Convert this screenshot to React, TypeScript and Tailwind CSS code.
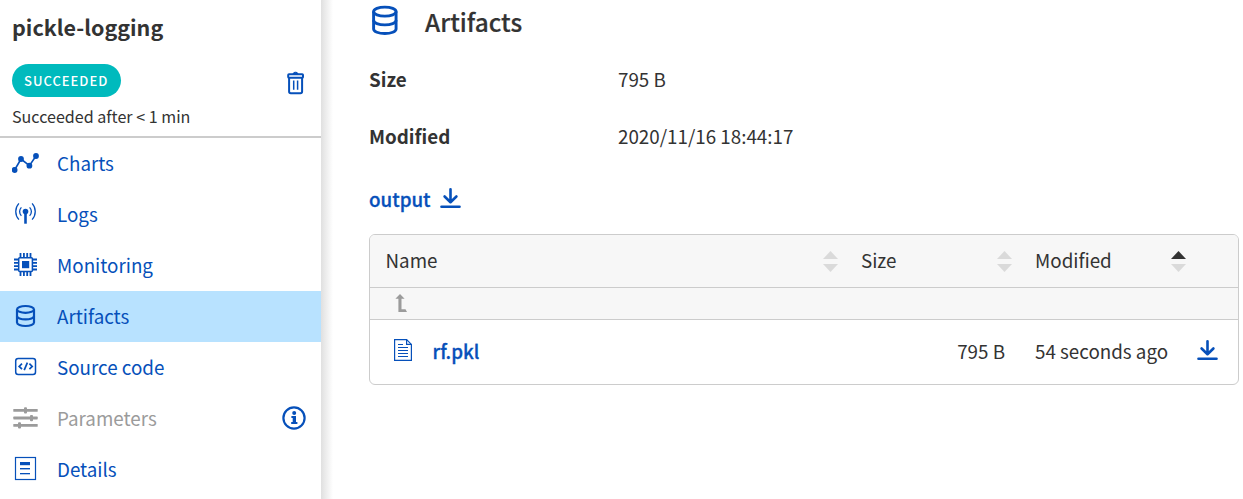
import type { ReactNode } from "react";

const BLUE = "#0650ba";

function Database({ className }: { className: string }) {
  return (
    <svg viewBox="0 0 28 27" className={className} fill="none" stroke={BLUE} strokeWidth="2.2">
      <ellipse cx="13.5" cy="6.4" rx="8.5" ry="3.4" />
      <path d="M5 6.4v13.2c0 1.9 3.8 3.4 8.5 3.4s8.5-1.5 8.5-3.4V6.4" />
      <path d="M5 13c0 1.9 3.8 3.4 8.5 3.4S22 14.9 22 13" />
    </svg>
  );
}

function ChartsIcon() {
  return (
    <svg viewBox="0 0 28 27" className="h-[27px] w-7" fill={BLUE}>
      <path d="M2.6 20 9 9l8.4 6.7L24 6" fill="none" stroke={BLUE} strokeWidth="1.6" />
      <circle cx="2.6" cy="20" r="2.9" />
      <circle cx="9" cy="9" r="2.9" />
      <circle cx="17.4" cy="15.7" r="2.9" />
      <circle cx="24" cy="6" r="2.9" />
    </svg>
  );
}

function LogsIcon() {
  return (
    <svg viewBox="0 0 28 27" className="h-[27px] w-7" fill="none" stroke={BLUE} strokeWidth="1.3">
      <circle cx="13.5" cy="10.6" r="2.8" fill={BLUE} stroke="none" />
      <path d="M13.5 11v11.7" strokeWidth="2.6" />
      <path d="M9.4 6.400c-2.400 2.400-2.400 6 0 8.400M17.600 6.400c2.400 2.400 2.400 6 0 8.400" />
      <path d="M6.900 2.400c-4.200 4.600-4.200 11.600 0 16.200M20.100 2.400c4.200 4.600 4.200 11.600 0 16.200" />
    </svg>
  );
}

function ChipIcon() {
  return (
    <svg viewBox="0 0 28 27" className="h-[27px] w-7" fill="none" stroke={BLUE}>
      <rect x="6.700" y="5.700" width="13.700" height="13.700" rx="1" strokeWidth="1.500" />
      <rect x="10" y="9" width="7.200" height="7.200" fill={BLUE} stroke="none" />
      <path
        strokeWidth="1.800"
        d="M8.500 1v4.500M11.900 1v4.500M15.200 1v4.500M18.500 1v4.500M8.500 19.500V24M11.900 19.500V24M15.200 19.500V24M18.500 19.500V24M2 7.500h4.500M2 10.900h4.500M2 14.200h4.500M2 17.500h4.500M20.500 7.500H25M20.500 10.900H25M20.500 14.200H25M20.500 17.500H25"
      />
    </svg>
  );
}

function CodeIcon() {
  return (
    <svg viewBox="0 0 28 27" className="h-[27px] w-7" fill="none" stroke={BLUE}>
      <rect x="3.7" y="4.6" width="19.8" height="15.8" rx="2.5" strokeWidth="1.5" />
      <path d="M10 9.700 7.200 12.400 10 15.100M17.400 9.700l2.800 2.700-2.800 2.700M15.400 8.600l-3.200 7.600" strokeWidth="1.700" />
    </svg>
  );
}

function SlidersIcon() {
  return (
    <svg viewBox="0 0 28 27" className="h-[27px] w-7" fill="#9b9b9b">
      <rect x="1.3" y="4" width="24.4" height="2.8" rx=".6" />
      <rect x="1.3" y="11.6" width="24.4" height="2.8" rx=".6" />
      <rect x="1.3" y="19" width="24.4" height="2.8" rx=".6" />
      <rect x="12" y="2.3" width="3" height="6.3" rx="1" />
      <rect x="18" y="9.9" width="3" height="6.3" rx="1" />
      <rect x="6" y="17.3" width="3" height="6.3" rx="1" />
    </svg>
  );
}

function DetailsIcon() {
  return (
    <svg viewBox="0 0 28 27" className="h-[27px] w-7" fill={BLUE}>
      <rect x="3.5" y="1.5" width="20" height="22" fill="none" stroke={BLUE} strokeWidth="1.2" />
      <rect x="8" y="6" width="10" height="3.2" />
      <rect x="8" y="12" width="10" height="1.4" />
      <rect x="8" y="17" width="10" height="1.3" />
    </svg>
  );
}

function TrashIcon() {
  return (
    <svg viewBox="0 0 18 24" className="h-6 w-[18px]" fill="none" stroke={BLUE} strokeWidth="2">
      <path d="M6 2.500C6.500 .8 10.500 .8 11 2.500z" fill={BLUE} strokeWidth="1" />
      <rect x="1.200" y="3.200" width="14.800" height="3.600" rx=".8" strokeWidth="2" />
      <path d="M2.100 7v13.500q0 1.700 1.700 1.700h9.600q1.700 0 1.700-1.700V7" />
      <path d="M6.700 9.500v9.200M10.600 9.500v9.200" strokeWidth="1.500" />
    </svg>
  );
}

function InfoIcon() {
  return (
    <svg viewBox="0 0 24 24" className="h-6 w-6" fill={BLUE}>
      <circle cx="12" cy="12" r="10.600" fill="none" stroke={BLUE} strokeWidth="2.200" />
      <circle cx="12.200" cy="7.100" r="2" />
      <path d="M9.400 10h4.600v6.100h1.400v1.900H9.200v-1.900h1.500v-4.200H9.400z" />
    </svg>
  );
}

function DownloadIcon() {
  return (
    <svg viewBox="0 0 22 22" className="h-[22px] w-[22px]" fill="none" stroke={BLUE} strokeWidth="2.600" strokeLinecap="round">
      <path d="M10.500 2.200v12.300M4.600 9.500l5.900 5.700 5.900-5.700" strokeLinejoin="round" />
      <path d="M1.500 19.700h18" />
    </svg>
  );
}

function UpIcon() {
  return (
    <svg viewBox="0 0 12 18" className="h-[18px] w-3" fill="#9b9b9b">
      <path d="M5 0 9.600 4.800H6.500v10.400h4L12 18H3.400V4.800H.4z" />
    </svg>
  );
}

function FileIcon() {
  return (
    <svg viewBox="0 0 18 22" className="h-[22px] w-[18px]" fill="none" stroke={BLUE}>
      <path d="M.6.600h12L17.400 5.400v16H.6z" strokeWidth="1.200" />
      <path d="M12.600.600v4.800h4.800" strokeWidth="1.200" />
      <path d="M4 5.500h5M4 8.500h10M4 11.500h10M4 14.500h10M4 17.500h10" strokeWidth="1.100" />
    </svg>
  );
}

function Sort({ active = false }: { active?: boolean }) {
  return (
    <svg viewBox="0 0 15 21" className="h-[21px] w-[15px]">
      <path d="M7.500 0 15 8H0z" fill={active ? "#333333" : "#dadada"} />
      <path d="M0 13h15l-7.500 8z" fill="#dadada" />
    </svg>
  );
}

interface Item {
  label: string;
  icon: ReactNode;
  active?: boolean;
  disabled?: boolean;
}

const items: Item[] = [
  { label: "Charts", icon: <ChartsIcon /> },
  { label: "Logs", icon: <LogsIcon /> },
  { label: "Monitoring", icon: <ChipIcon /> },
  { label: "Artifacts", icon: <Database className="h-[27px] w-7" />, active: true },
  { label: "Source code", icon: <CodeIcon /> },
  { label: "Parameters", icon: <SlidersIcon />, disabled: true },
  { label: "Details", icon: <DetailsIcon /> },
];

function Sidebar() {
  return (
    <aside className="w-[321px] shrink-0 bg-white">
      <header className="h-[138px] border-b-2 border-[#cccccc] pl-3 pr-4">
        <h1 className="pt-[11px] text-[21.5px] font-bold leading-8">pickle-logging</h1>
        <div className="mt-[21px] flex items-start justify-between">
          <span className="flex h-[33px] w-[109px] items-center whitespace-nowrap rounded-full bg-[#00babd] pl-3 text-[13px] font-medium leading-none tracking-[1px] text-white">
            SUCCEEDED
          </span>
          <button className="mt-[7px]">
            <TrashIcon />
          </button>
        </div>
        <p className="mt-[7px] text-[16.1px] leading-6">Succeeded after &lt; 1 min</p>
      </header>
      <nav>
        {items.map((item) => (
          <a
            key={item.label}
            className={`flex h-[51px] items-center pl-3 pr-[15px] ${item.active ? "bg-[#b8e2ff]" : ""} ${
              item.disabled ? "text-[#9b9b9b]" : "text-[#0650ba]"
            }`}
          >
            {item.icon}
            <span className="ml-[17px] flex-1 pb-0.5">{item.label}</span>
            {item.disabled && (
              <span className="pb-px">
                <InfoIcon />
              </span>
            )}
          </a>
        ))}
      </nav>
    </aside>
  );
}

function Table() {
  return (
    <div className="mt-[21px] h-[151px] w-[870px] overflow-hidden rounded-md border border-[#cccccc]">
      <div className="grid h-[53px] grid-cols-[475px_174px_174px_45px] items-center border-b border-[#cccccc] bg-[#f7f7f7]">
        <div className="flex items-center justify-between pl-[15.5px] pr-[7px]">
          <span className="pb-0.5">Name</span> <Sort />
        </div>
        <div className="flex items-center justify-between pl-4 pr-[7px]">
          <span className="pb-0.5">Size</span> <Sort />
        </div>
        <div className="flex items-center justify-between pl-4 pr-[7px]">
          <span className="pb-0.5">Modified</span> <Sort active />
        </div>
      </div>
      <div className="flex h-8 items-center border-b border-[#cccccc] bg-[#f7f7f7] pb-0.5 pl-[25px]">
        <UpIcon />
      </div>
      <div className="grid h-16 grid-cols-[475px_174px_174px_45px] items-center pb-0.5">
        <div className="flex items-center pl-6">
          <span className="pb-0.5">
            <FileIcon />
          </span>
          <span className="ml-[20.5px] font-medium text-[#0650ba] [-webkit-text-stroke:0.3px]">rf.pkl</span>
        </div>
        <div className="pr-[14px] text-right">795 B</div>
        <div className="pl-4">54 seconds ago</div>
        <div className="pb-0.5 pl-1">
          <DownloadIcon />
        </div>
      </div>
    </div>
  );
}

export default function App() {
  return (
    <div className="flex h-[499px] w-[1243px] overflow-hidden bg-white font-['Noto_Sans_CJK_SC','Noto_Sans',sans-serif] text-[18.8px] leading-7 text-[#333333]">
      <Sidebar />
      <div className="w-3 shrink-0 bg-gradient-to-r from-[#e0e0e0] to-white" />
      <main className="flex-1 pl-9">
        <div className="flex h-[45px] items-center">
          <Database className="-ml-[2px] -mt-1 h-[36px] w-[37px]" />
          <h2 className="ml-[21px] pb-0.5 text-[24.4px] font-medium [-webkit-text-stroke:0.2px]">Artifacts</h2>
        </div>
        <dl className="mt-5 grid grid-cols-[249px_1fr] gap-y-[29px]">
          <dt className="font-bold">Size</dt>
          <dd>795 B</dd>
          <dt className="font-bold">Modified</dt>
          <dd>2020/11/16 18:44:17</dd>
        </dl>
        <div className="mt-[35px] flex h-7 items-center pb-px font-medium text-[#0650ba]">
          <span className="w-[62px] [-webkit-text-stroke:0.3px]">output</span>
          <span className="ml-[9px] pb-px">
            <DownloadIcon />
          </span>
        </div>
        <Table />
      </main>
    </div>
  );
}
